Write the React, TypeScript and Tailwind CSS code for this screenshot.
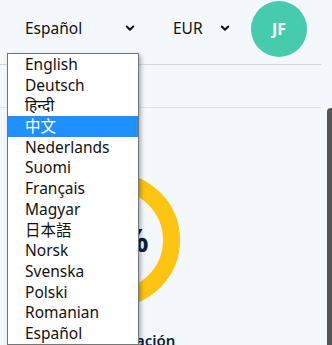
import React from "react";

const langs = [
  "English",
  "Deutsch",
  "हिन्दी",
  "中文",
  "Nederlands",
  "Suomi",
  "Français",
  "Magyar",
  "日本語",
  "Norsk",
  "Svenska",
  "Polski",
  "Romanian",
  "Español",
];

function Chevron() {
  return (
    <svg width="10" height="7" viewBox="0 0 10 7" className="block">
      <polyline points="1.8,1.5 5,4.8 8.2,1.5" fill="none" stroke="#111" strokeWidth="2" strokeLinecap="round" strokeLinejoin="round" />
    </svg>
  );
}

export default function App() {
  const font = { fontFamily: '"Noto Sans", "Noto Sans CJK SC", sans-serif' };
  return (
    <div className="relative w-[332px] h-[345px] overflow-hidden bg-[#f4f8fc] text-[#111]" style={font}>
      <div className="mr-[11px]">
        <div className="h-[65px] pb-[7px] border-b border-[#d3d6da] flex items-center">
          <div className="ml-[25px] w-[110px] flex items-center justify-between text-[15.5px]">
            <span>Español</span>
            <Chevron />
          </div>
          <div className="ml-[38px] w-[57px] flex items-center justify-between text-[15.5px]">
            <span>EUR</span>
            <Chevron />
          </div>
          <div className="ml-[21px] w-[56px] h-[56px] rounded-full bg-[#46cbad] flex items-center justify-center text-white font-bold text-[16px]">
            JF
          </div>
        </div>
        <div className="h-[43px] border-b border-[#dde0e4]"></div>
        <div className="ml-[46px] mt-[65px] w-[134px] flex flex-col items-center">
          <div className="relative w-[134px] h-[134px]">
            <svg width="134" height="134" viewBox="0 0 134 134">
              <circle cx="67" cy="67" r="58.5" fill="none" stroke="#fdc411" strokeWidth="17" />
            </svg>
            <div className="absolute inset-0 flex items-center justify-center pl-[6px] text-[32px] font-bold text-[#0b1f3d]">75%</div>
          </div>
          <div className="mt-[22px] whitespace-nowrap text-[15px] font-semibold text-[#0b1f3d]">Tasa de afiliación</div>
        </div>
      </div>
      <div className="absolute right-0 top-[108px] w-[5px] h-[240px] rounded-tl-[4px] bg-[#555]"></div>
      <div className="absolute left-[7px] top-[53px] w-[132px] bg-white border border-[#767676] shadow-[2px_2px_4px_rgba(0,0,0,0.3)]">
        {langs.map((l) => (
          <div
            key={l}
            className={
              "h-[20.7px] leading-[20.7px] pl-[17px] text-[15.5px] whitespace-nowrap " +
              (l === "中文" ? "bg-[#1e90ff] text-white" : "text-[#111]")
            }
          >
            {l}
          </div>
        ))}
      </div>
    </div>
  );
}
